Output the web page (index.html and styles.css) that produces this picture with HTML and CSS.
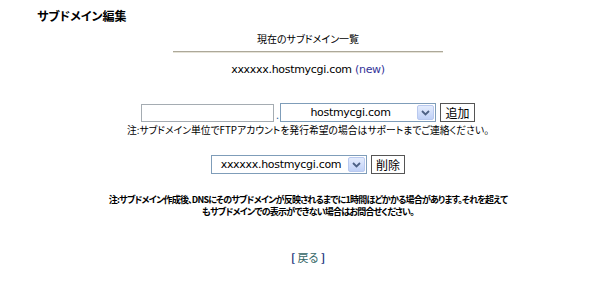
FILE: index.html
```html
<!DOCTYPE html>
<html lang="ja">
<head>
    <meta charset="UTF-8">
    <title>サブドメイン編集</title>
    <link rel="stylesheet" href="styles.css">
</head>
<body>
    <!-- Title -->
    <h1 class="title">サブドメイン編集</h1>

    <div class="content">
        <p class="list-head">現在のサブドメイン一覧</p>
        <hr class="rule">
        <p class="current">xxxxxx.hostmycgi.com <span class="new">(new)</span></p>

        <!-- Add form -->
        <form class="row add-row">
            <input type="text" class="sub-input">
            <span class="dot">.</span>
            <div class="select-box wide">
                <select>
                    <option>hostmycgi.com</option>
                </select>
                <span class="arrow"><svg width="9" height="6" viewBox="0 0 9 6"><path d="M1 1 L4.5 4.5 L8 1" fill="none" stroke="#4d6185" stroke-width="1.8"/></svg></span>
            </div>
            <button type="submit" class="btn">追加</button>
        </form>
        <p class="note">注:サブドメイン単位でFTPアカウントを発行希望の場合はサポートまでご連絡ください。</p>

        <!-- Delete form -->
        <form class="row del-row">
            <div class="select-box">
                <select>
                    <option>xxxxxx.hostmycgi.com</option>
                </select>
                <span class="arrow"><svg width="9" height="6" viewBox="0 0 9 6"><path d="M1 1 L4.5 4.5 L8 1" fill="none" stroke="#4d6185" stroke-width="1.8"/></svg></span>
            </div>
            <button type="submit" class="btn">削除</button>
        </form>

        <p class="warn">注:サブドメイン作成後、DNSにそのサブドメインが反映されるまでに1時間ほどかかる場合があります。それを超えて<br>もサブドメインでの表示ができない場合はお問合せください。</p>

        <p class="back">[ <a href="#">戻る</a> ]</p>
    </div>
</body>
</html>
```

FILE: styles.css
```css
* {
    margin: 0;
    padding: 0;
    box-sizing: border-box;
}

body {
    background-color: #fff;
    color: #000;
    font-family: "DejaVu Sans", "Noto Sans CJK JP", sans-serif;
    font-size: 10px;
    width: 600px;
    height: 300px;
    overflow: hidden;
}

.title,
.list-head,
.note,
.warn,
.back,
.btn {
    font-family: "Noto Sans CJK JP", sans-serif;
    font-feature-settings: "palt";
}

.title {
    font-size: 12px;
    font-weight: bold;
    margin: 9px 0 0 37px;
    line-height: 14px;
}

.content {
    padding-left: 16px;
    text-align: center;
}

.list-head {
    font-size: 10px;
    line-height: 12px;
    margin-top: 10px;
}

.rule {
    width: 270px;
    margin: 6px auto 0;
    border: none;
    border-top: 1px solid #aca899;
    border-bottom: 1px solid #e6e3d8;
}

.current {
    font-size: 11px;
    line-height: 14px;
    margin-top: 10px;
    letter-spacing: -0.3px;
}

.new {
    color: #333399;
}

.row {
    display: flex;
    justify-content: center;
    align-items: center;
}

.add-row {
    margin-top: 26px;
}

.sub-input {
    width: 133px;
    height: 18px;
    border: 1px solid #a5acb2;
}

.dot {
    width: 6px;
    font-size: 11px;
    color: #336699;
    align-self: flex-end;
}

.select-box {
    display: flex;
    align-items: center;
    width: 156px;
    height: 19px;
    border: 1px solid #7f9db9;
    background-color: #fff;
}

.select-box select {
    flex: 1;
    height: 100%;
    border: none;
    outline: none;
    appearance: none;
    background: transparent;
    font-family: "DejaVu Sans", sans-serif;
    font-size: 11px;
    letter-spacing: -0.3px;
    text-align: center;
    text-align-last: center;
    padding-left: 2px;
}

.arrow {
    display: flex;
    align-items: center;
    justify-content: center;
    width: 17px;
    height: 15px;
    margin-right: 1px;
    border: 1px solid #b9c9ef;
    border-radius: 2px;
    background: linear-gradient(#e4ecfd, #c0d1f7);
}

.btn {
    margin-left: 4px;
    height: 19px;
    padding: 0 4px;
    border: 1px solid #555;
    background-color: #fff;
    font-size: 12px;
    line-height: 15px;
}

.note {
    font-size: 9.8px;
    line-height: 12px;
    margin-top: 2px;
}

.del-row {
    margin-top: 19px;
}

.warn {
    font-size: 9px;
    font-weight: bold;
    line-height: 12px;
    letter-spacing: -0.8px;
    margin-top: 20px;
}

.back {
    font-size: 11px;
    font-weight: bold;
    color: #1a3380;
    margin-top: 33px;
    line-height: 12px;
}

.back a {
    color: #336666;
    font-weight: normal;
    text-decoration: none;
}
```
